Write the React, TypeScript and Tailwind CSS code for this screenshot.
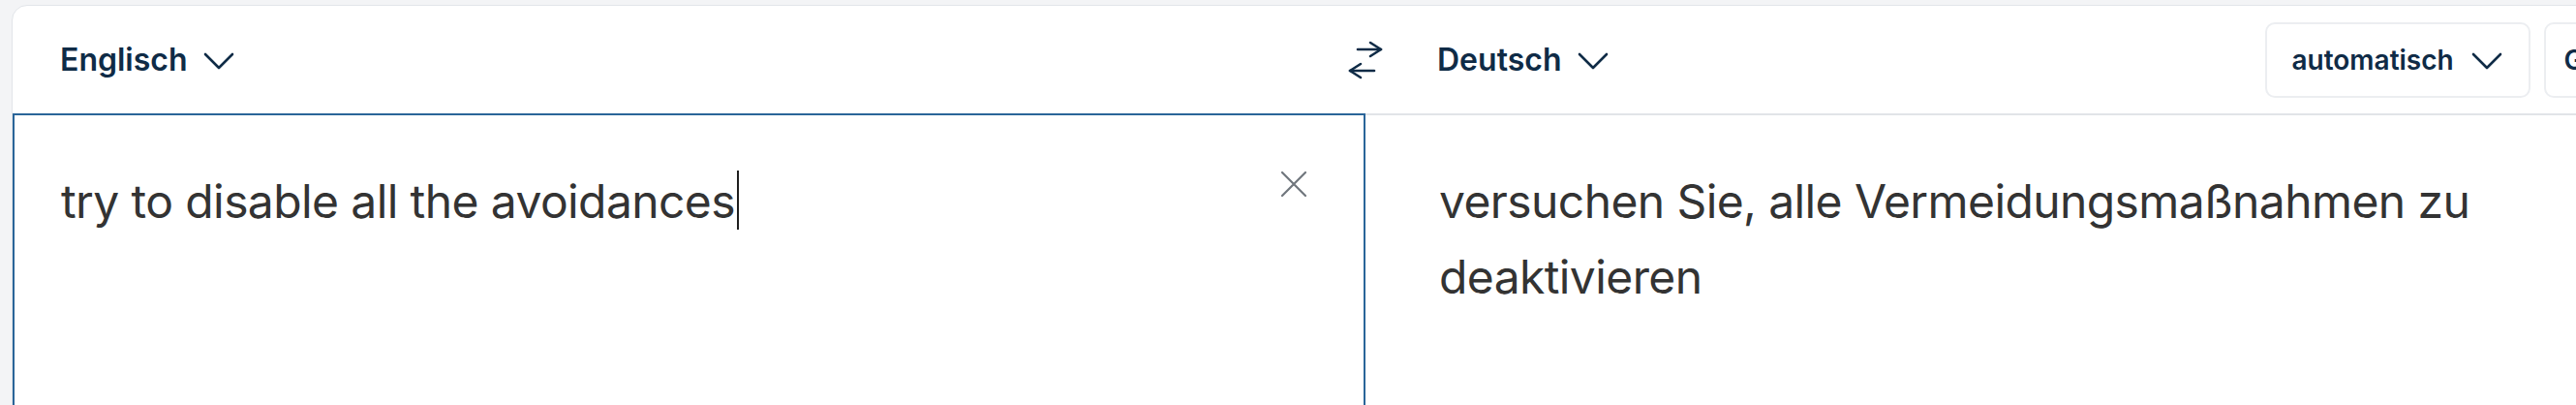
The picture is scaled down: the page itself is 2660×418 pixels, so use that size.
import React from 'react';

const Chevron = ({ className = '' }: { className?: string }) => (
  <svg viewBox="0 0 32 18" className={className} fill="none" stroke="currentColor" strokeWidth={2.6} strokeLinecap="round" strokeLinejoin="round">
    <path d="M2 2 16 16 30 2" />
  </svg>
);

const SwapIcon = () => (
  <svg viewBox="0 0 36 40" className="w-[36px] h-[40px] shrink-0 text-[#0f2b46]" fill="none" stroke="currentColor" strokeWidth={2.6} strokeLinecap="round" strokeLinejoin="round">
    <path d="M10 9h24" />
    <path d="M23 2l11 7-11 7" />
    <path d="M2 31h25" />
    <path d="M13 24 2 31l11 7" />
  </svg>
);

const CloseIcon = () => (
  <svg viewBox="0 0 28 28" className="w-[28px] h-[28px] text-[#70767d]" fill="none" stroke="currentColor" strokeWidth={2.2} strokeLinecap="round">
    <path d="M2 2l24 24M26 2 2 26" />
  </svg>
);

export default function App() {
  return (
    <div
      className="w-full h-[418px] overflow-hidden bg-[#f3f4f6] pt-[5px] pl-[12px]"
      style={{ fontFamily: 'Inter, "Noto Sans", sans-serif' }}
    >
      <div className="w-[2900px] h-[430px] bg-white border border-[#e2e5e9] rounded-tl-[16px] flex flex-col">
        {/* header */}
        <div className="h-[113px] shrink-0 flex items-center border-b-2 border-[#e1e4e8] text-[#0f2b46] font-semibold">
          <div className="w-[1379px] shrink-0 pl-[49px] flex items-center gap-[16px]">
            <span className="text-[32px]">Englisch</span>
            <Chevron className="w-[32px] h-[18px] mt-[2px]" />
          </div>
          <SwapIcon />
          <div className="flex items-center shrink-0 pl-[56px]">
            <div className="flex items-center gap-[17px] shrink-0">
              <span className="text-[32px]">Deutsch</span>
              <Chevron className="w-[32px] h-[18px] mt-[2px]" />
            </div>
            <div className="ml-[678px] flex items-center gap-[14px] shrink-0">
              <button className="h-[78px] w-[274px] shrink-0 rounded-[10px] border-2 border-[#eceef1] flex items-center pl-[25px] gap-[18px]">
                <span className="text-[28px]">automatisch</span>
                <Chevron className="w-[32px] h-[18px] mt-[2px]" />
              </button>
              <button className="h-[78px] w-[200px] shrink-0 rounded-[10px] border-2 border-[#eceef1] flex items-center pl-[18px]">
                <span className="text-[28px]">Glossar</span>
              </button>
            </div>
          </div>
        </div>

        {/* body */}
        <div className="flex flex-1 -mt-[2px]">
          <div className="relative w-[1397px] shrink-0 border-2 border-[#2a6599] pt-[50px] pl-[48px] text-[#333333] text-[48px] leading-[77px] tracking-[-0.6px]">
            <p>
              try to disable all the avoidances
              <span className="inline-block w-[2px] h-[61px] bg-[#1f1f1f] ml-[2px] align-[-12px]" />
            </p>
            <button className="absolute top-[57px] right-[58px]">
              <CloseIcon />
            </button>
          </div>
          <div className="flex-1 pt-[52px] pl-[76px] text-[#333333] text-[48px] leading-[78px] tracking-[-0.6px]">
            <p className="w-[1120px]">versuchen Sie, alle Vermeidungsmaßnahmen zu deaktivieren</p>
          </div>
        </div>
      </div>
    </div>
  );
}
